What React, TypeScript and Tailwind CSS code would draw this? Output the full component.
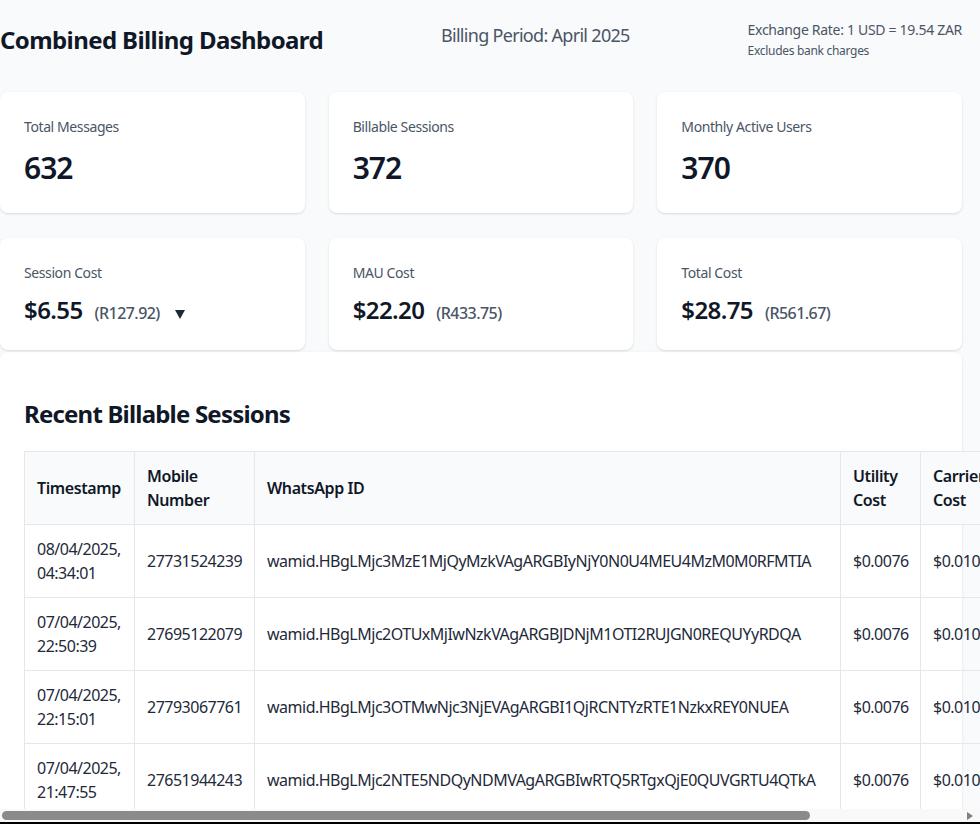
import React from "react";

type Row = { date: string; time: string; mobile: string; wamid: string; utility: string; carrier: string; total: string; zar: string };

const rows: Row[] = [
  { date: "08/04/2025,", time: "04:34:01", mobile: "27731524239", wamid: "wamid.HBgLMjc3MzE1MjQyMzkVAgARGBIyNjY0N0U4MEU4MzM0M0RFMTIA", utility: "$0.0076", carrier: "$0.0100", total: "$0.0176", zar: "R0.34" },
  { date: "07/04/2025,", time: "22:50:39", mobile: "27695122079", wamid: "wamid.HBgLMjc2OTUxMjIwNzkVAgARGBJDNjM1OTI2RUJGN0REQUYyRDQA", utility: "$0.0076", carrier: "$0.0100", total: "$0.0176", zar: "R0.34" },
  { date: "07/04/2025,", time: "22:15:01", mobile: "27793067761", wamid: "wamid.HBgLMjc3OTMwNjc3NjEVAgARGBI1QjRCNTYzRTE1NzkxREY0NUEA", utility: "$0.0076", carrier: "$0.0100", total: "$0.0176", zar: "R0.34" },
  { date: "07/04/2025,", time: "21:47:55", mobile: "27651944243", wamid: "wamid.HBgLMjc2NTE5NDQyNDMVAgARGBIwRTQ5RTgxQjE0QUVGRTU4QTkA", utility: "$0.0076", carrier: "$0.0100", total: "$0.0176", zar: "R0.34" },
  { date: "07/04/2025,", time: "20:12:31", mobile: "27714560912", wamid: "wamid.HBgLMjc3MTQ1NjA5MTIVAgARGBIzRjA1QkE2NzFCQ0Q4RUE1MkMA", utility: "$0.0076", carrier: "$0.0100", total: "$0.0176", zar: "R0.34" },
];

function StatCard({ label, value }: { label: string; value: string }) {
  return (
    <div className="bg-white rounded-lg shadow-sm px-6 pt-[25px] h-[121px]">
      <div className="text-sm leading-5 tracking-[-0.4px] text-gray-600">{label}</div>
      <div className="mt-[13px] text-3xl leading-9 tracking-[-1px] font-semibold text-gray-900">{value}</div>
    </div>
  );
}

function CostCard({ label, usd, zar, caret }: { label: string; usd: string; zar: string; caret?: boolean }) {
  return (
    <div className="bg-white rounded-lg shadow-sm px-6 pt-[25px] h-[112px]">
      <div className="text-sm leading-5 tracking-[-0.4px] text-gray-600">{label}</div>
      <div className="mt-[11px] flex items-baseline">
        <span className="text-2xl leading-8 tracking-[-0.6px] font-semibold text-gray-900">{usd}</span>
        <span className="ml-3 text-base leading-6 tracking-[-0.55px] font-medium text-gray-600">{zar}</span>
        {caret && (
          <svg className="ml-[15px]" width="10" height="9" viewBox="0 0 10 9">
            <path d="M0 0 H10 L5 9 Z" fill="#1f2937" />
          </svg>
        )}
      </div>
    </div>
  );
}

const th = "border border-gray-200 px-3 py-3 text-left align-middle font-semibold leading-6 tracking-[-0.4px] text-gray-900";
const td = "border border-gray-200 px-3 py-3 align-middle leading-6 tracking-[-0.5px] text-gray-800 whitespace-nowrap";

export default function App() {
  return (
    <div className="w-[980px] h-[824px] overflow-hidden bg-gray-50 flex flex-col font-['Noto_Sans',sans-serif] text-gray-900">
      <div className="flex-1 min-h-0 overflow-hidden">
        <div className="w-[962px]">
          <header className="h-[92px] pt-[19px] flex justify-between items-start">
            <h1 className="mt-[5px] text-2xl leading-8 font-bold tracking-[-0.6px] text-gray-900">Combined Billing Dashboard</h1>
            <div className="mt-[2px] text-lg leading-7 tracking-[-0.7px] text-gray-600">Billing Period: April 2025</div>
            <div className="mt-[1px] text-gray-600">
              <div className="text-sm leading-5 tracking-[-0.3px]">Exchange Rate: 1 USD = 19.54 ZAR</div>
              <div className="mt-[3px] text-xs leading-4 tracking-[-0.3px]">Excludes bank charges</div>
            </div>
          </header>

          <div className="grid grid-cols-3 gap-x-6">
            <StatCard label="Total Messages" value="632" />
            <StatCard label="Billable Sessions" value="372" />
            <StatCard label="Monthly Active Users" value="370" />
          </div>

          <div className="mt-[25px] grid grid-cols-3 gap-x-6">
            <CostCard label="Session Cost" usd="$6.55" zar="(R127.92)" caret />
            <CostCard label="MAU Cost" usd="$22.20" zar="(R433.75)" />
            <CostCard label="Total Cost" usd="$28.75" zar="(R561.67)" />
          </div>

          <section className="mt-[2px] bg-white rounded-lg shadow-sm pt-[46px] px-6 pb-6">
            <h2 className="text-2xl leading-8 font-bold tracking-[-0.8px] text-gray-900">Recent Billable Sessions</h2>
            <table className="mt-[21px] border-collapse table-fixed w-[1136px] text-base">
              <thead>
                <tr className="bg-gray-50">
                  <th className={`${th} w-[110px]`}>Timestamp</th>
                  <th className={`${th} w-[120px]`}>Mobile Number</th>
                  <th className={`${th} w-[586px]`}>WhatsApp ID</th>
                  <th className={`${th} w-[80px]`}>Utility Cost</th>
                  <th className={`${th} w-[80px]`}>Carrier Cost</th>
                  <th className={`${th} w-[80px]`}>Total Cost</th>
                  <th className={`${th} w-[80px]`}>Total ZAR</th>
                </tr>
              </thead>
              <tbody>
                {rows.map((r) => (
                  <tr key={r.wamid}>
                    <td className={td}>
                      {r.date}
                      <br />
                      {r.time}
                    </td>
                    <td className={td}>{r.mobile}</td>
                    <td className={td}>{r.wamid}</td>
                    <td className={td}>{r.utility}</td>
                    <td className={td}>{r.carrier}</td>
                    <td className={td}>{r.total}</td>
                    <td className={td}>{r.zar}</td>
                  </tr>
                ))}
              </tbody>
            </table>
          </section>
        </div>
      </div>

      <div className="h-[13px] shrink-0 bg-[#f9f9f9] flex items-center pl-[2px] pr-[7px]">
        <div className="h-[9px] w-[808px] rounded-full bg-[#8b8b8b]" />
        <div className="flex-1" />
        <svg width="6" height="8" viewBox="0 0 6 8">
          <path d="M0 0 L6 4 L0 8 Z" fill="#7f7f7f" />
        </svg>
      </div>
      <div className="h-[2px] shrink-0 bg-black" />
    </div>
  );
}
